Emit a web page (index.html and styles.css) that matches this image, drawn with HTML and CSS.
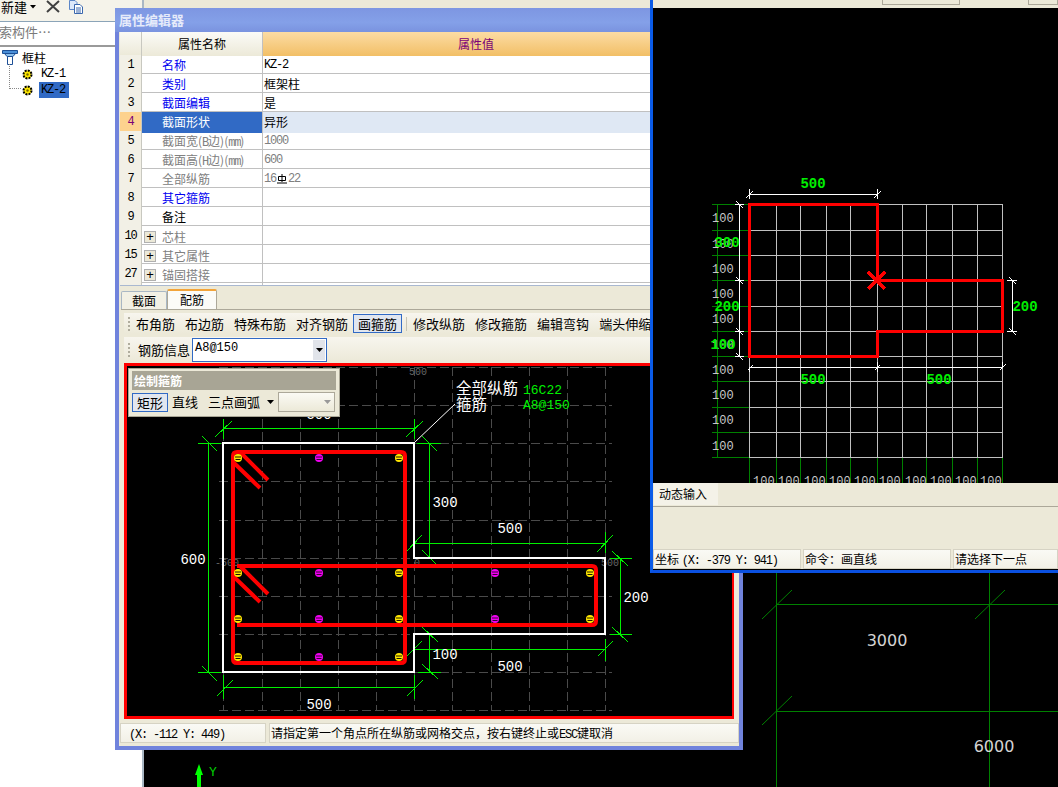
FILE: index.html
```html
<!DOCTYPE html>
<html lang="zh">
<head>
<meta charset="utf-8">
<title>属性编辑器</title>
<link rel="stylesheet" href="styles.css">
</head>
<body>
<div class="app">
  <aside class="left-pane">
    <div class="left-tools">
      <span class="new-btn">新建</span>
      <svg class="tri-icon" width="6" height="4" viewBox="0 0 6 4"><path d="M0 0H6L3 3.5Z" fill="#000"/></svg>
      <svg class="close-icon" width="14" height="13" viewBox="0 0 14 13"><path d="M1 1L13 12M13 1L1 12" stroke="#404040" stroke-width="2" fill="none"/></svg>
      <svg class="copy-icon" width="16" height="14" viewBox="0 0 16 14"><path d="M1.5 .5H7L9 2.5V9.5H1.5Z" fill="#dce8fa" stroke="#5c86c8"/><path d="M6.500 4.500H12L14.500 7V13.500H6.500Z" fill="#fff" stroke="#3a67ad"/><path d="M8 8H13M8 10H13M8 12H13" stroke="#3a67ad"/></svg>
    </div>
    <div class="search"><span class="search-text">搜索构件…</span></div>
    <div class="tree">
      <div class="tree-root">
        <svg width="16" height="15" viewBox="0 0 16 15"><path d="M.5 .5H15.500V3.500H.5Z" fill="#4a8fd8" stroke="#1c4f96"/><path d="M2.500 3.500L5 6.500H11L13.500 3.500Z" fill="#8cc0ee" stroke="#1c4f96"/><path d="M5.500 6.500H10.500V14.500H5.500Z" fill="#fff" stroke="#1c4f96"/></svg>
        <span>框柱</span>
      </div>
      <div class="tree-leaf">
        <svg class="gear" width="11" height="11" viewBox="0 0 11 11"><circle cx="5.500" cy="5.500" r="4" fill="#ffe800" stroke="#000" stroke-width="2" stroke-dasharray="2 1.100"/><circle cx="5.500" cy="5.500" r="1.200" fill="#7a6a00"/></svg>
        <span class="lat leaf-label">KZ-1</span>
      </div>
      <div class="tree-leaf">
        <svg class="gear" width="11" height="11" viewBox="0 0 11 11"><circle cx="5.500" cy="5.500" r="4" fill="#ffe800" stroke="#000" stroke-width="2" stroke-dasharray="2 1.100"/><circle cx="5.500" cy="5.500" r="1.200" fill="#7a6a00"/></svg>
        <span class="lat leaf-label is-selected">KZ-2</span>
      </div>
      <div class="tree-guide"></div>
    </div>
  </aside>

  <main class="workspace">
    <div class="top-strip"></div>
    <svg class="back-drawing" viewBox="144 8 914 779" width="914" height="779">
      <path class="grn-dark" d="M776.500 8V787M989.500 8V787M776 604.500H1058M776 711.500H1058"/>
      <path class="grn-dark thin" d="M762 619L792 590M975 619L1005 590M762 725L792 696"/>
      <text class="back-num" x="887" y="646" text-anchor="middle">3000</text>
      <text class="back-num" x="994" y="752" text-anchor="middle">6000</text>
      <path d="M199 764L203 775H201V787H197V775H195Z" fill="#00ff00"/>
      <text class="axis-label" x="209" y="776">Y</text>
    </svg>
  </main>

  <section class="prop-win">
    <header class="prop-title">属性编辑器</header>
    <div class="prop-table">
      <div class="prop-row prop-head"><div class="num"></div><div class="name-head">属性名称</div><div class="val-head">属性值</div></div>
      <div class="prop-row"><div class="num">1</div><div class="name link">名称</div><div class="val"><span class="lat">KZ-2</span></div></div>
      <div class="prop-row"><div class="num">2</div><div class="name link">类别</div><div class="val">框架柱</div></div>
      <div class="prop-row"><div class="num">3</div><div class="name link">截面编辑</div><div class="val">是</div></div>
      <div class="prop-row is-current"><div class="num">4</div><div class="name">截面形状</div><div class="val">异形</div></div>
      <div class="prop-row"><div class="num">5</div><div class="name muted">截面宽(<span class="lat">B</span>边)(<span class="lat">mm</span>)</div><div class="val muted"><span class="lat">1000</span></div></div>
      <div class="prop-row"><div class="num">6</div><div class="name muted">截面高(<span class="lat">H</span>边)(<span class="lat">mm</span>)</div><div class="val muted"><span class="lat">600</span></div></div>
      <div class="prop-row"><div class="num">7</div><div class="name muted">全部纵筋</div><div class="val muted"><span class="lat">16</span><svg class="rebar" width="10" height="10" viewBox="0 0 10 10"><path d="M1.500 2.500H8.500V6.500H1.500ZM5 0V8M0 9H10" fill="none" stroke="#000"/></svg><span class="lat">22</span></div></div>
      <div class="prop-row"><div class="num">8</div><div class="name link">其它箍筋</div><div class="val"></div></div>
      <div class="prop-row"><div class="num">9</div><div class="name">备注</div><div class="val"></div></div>
      <div class="prop-row"><div class="num">10</div><div class="name muted is-group"><span class="plus">+</span>芯柱</div><div class="val"></div></div>
      <div class="prop-row"><div class="num">15</div><div class="name muted is-group"><span class="plus">+</span>其它属性</div><div class="val"></div></div>
      <div class="prop-row"><div class="num">27</div><div class="name muted is-group"><span class="plus">+</span>锚固搭接</div><div class="val"></div></div>
    </div>
    <div class="tabs">
      <span class="tab">截面</span>
      <span class="tab is-active">配筋</span>
    </div>
    <div class="toolbar">
      <span class="grip"></span>
      <span class="tool">布角筋</span>
      <span class="tool">布边筋</span>
      <span class="tool">特殊布筋</span>
      <span class="tool">对齐钢筋</span>
      <span class="tool is-on">画箍筋</span>
      <span class="tool-sep"></span>
      <span class="tool">修改纵筋</span>
      <span class="tool">修改箍筋</span>
      <span class="tool">编辑弯钩</span>
      <span class="tool">端头伸缩</span>
    </div>
    <div class="toolbar toolbar-two">
      <span class="grip"></span>
      <span class="info-label">钢筋信息</span>
      <div class="combo"><span class="combo-text">A8@150</span><span class="combo-btn"><svg width="7" height="4" viewBox="0 0 7 4"><path d="M0 0H7L3.500 4Z" fill="#000"/></svg></span></div>
    </div>
    <div class="canvas-frame">
      <svg class="draw" viewBox="127 367 605 350" width="605" height="350">
        <defs>
          <g id="dot-y"><circle r="4" fill="#ffe600"/><path d="M-3 -1H3M-2.500 1.500H2.500" stroke="#000" stroke-width=".9"/></g>
          <g id="dot-m"><circle r="4" fill="#f000f0"/><path d="M-3 -1H3M-2.500 1.500H2.500" stroke="#200020" stroke-width=".9"/></g>
        </defs>
        <path class="grid-dash" d="M223.500 368V712M262.500 368V712M300.500 368V712M338.500 368V712M376.500 368V712M414.500 368V712M452.500 368V712M491.500 368V712M529.500 368V712M567.500 368V712M605.500 368V712M219 368.500H612M219 406.500H612M219 444.500H612M219 482.500H612M219 521.500H612M219 559.500H612M219 597.500H612M219 635.500H612M219 673.500H612M219 711.500H612"/>
        <text class="axis-num" x="418" y="376" text-anchor="middle">500</text>
        <text class="axis-num" x="215" y="567">-500</text>
        <text class="axis-num" x="414" y="567">0</text>
        <text class="axis-num" x="601" y="567">500</text>

        <path class="grn" d="M223.500 429.500H414.500M223.500 420V440M414.500 420V440M215 438L232 422M406 438L423 422"/>
        <path class="grn" d="M208.500 444V673M198 444.500H221M198 673.500H221M202 437L217 452M202 667L217 682"/>
        <path class="grn" d="M223.500 688.500H414.500M223.500 676V700M414.500 676V700M217 697L233 681M407 697L423 681"/>
        <path class="grn" d="M429.500 444V559M417 444.500H441M418 559.500H441M422 437L437 452M422 551L438 567"/>
        <path class="grn" d="M414.500 544.500H605.500M414.500 533V558M605.500 533V554M406 553L422 536M597 553L613 536"/>
        <path class="grn" d="M620.500 559V635M610 559.500H632M610 635.500H632M612 552L628 567M612 628L628 643"/>
        <path class="grn" d="M414.500 650.500H605.500M414.500 640V662M605.500 640V662M406 658L422 642M598 657L613 642"/>
        <path class="grn" d="M429.500 635V673M418 635.500H441M418 673.500H441M422 628L438 643M422 665L438 680"/>
        <path class="wht-thin" d="M415 443L455 405"/>

        <path class="outline" d="M223 444H414V559H605V635H414V673H223Z"/>

        <path class="stirrup" d="M233 457Q233 453 237 453H401Q405 453 405 457V660Q405 664 401 664H237Q233 664 233 660Z"/>
        <path class="stirrup" d="M237 567H592Q596 567 596 571V622Q596 626 592 626H237"/>
        <path class="stirrup" d="M240 453L268 481M233 463L260 489M240 567L268 595M233 577L260 603"/>

        <use href="#dot-y" x="238" y="459"/><use href="#dot-m" x="319" y="459"/><use href="#dot-y" x="399" y="459"/>
        <use href="#dot-y" x="238" y="574"/><use href="#dot-m" x="319" y="574"/><use href="#dot-y" x="399" y="574"/><use href="#dot-m" x="495" y="574"/><use href="#dot-y" x="590" y="574"/>
        <use href="#dot-y" x="238" y="620"/><use href="#dot-m" x="319" y="620"/><use href="#dot-y" x="399" y="620"/><use href="#dot-m" x="495" y="620"/><use href="#dot-y" x="590" y="620"/>
        <use href="#dot-y" x="238" y="658"/><use href="#dot-m" x="319" y="658"/><use href="#dot-y" x="399" y="658"/>

        <text class="dim-num" x="319" y="420" text-anchor="middle">500</text>
        <text class="dim-num" x="193" y="565" text-anchor="middle">600</text>
        <text class="dim-num" x="319" y="710" text-anchor="middle">500</text>
        <text class="dim-num" x="445" y="508" text-anchor="middle">300</text>
        <text class="dim-num" x="510" y="534" text-anchor="middle">500</text>
        <text class="dim-num" x="636" y="603" text-anchor="middle">200</text>
        <text class="dim-num" x="445" y="660" text-anchor="middle">100</text>
        <text class="dim-num" x="510" y="672" text-anchor="middle">500</text>
        <text class="note" x="456" y="395">全部纵筋</text>
        <text class="note" x="456" y="411">箍筋</text>
        <text class="note-val" x="523" y="395">16C22</text>
        <text class="note-val" x="523" y="410">A8@150</text>
      </svg>
      <div class="float-panel">
        <div class="float-title">绘制箍筋</div>
        <div class="float-tools">
          <span class="float-tool is-on">矩形</span>
          <span class="float-tool">直线</span>
          <span class="float-tool">三点画弧</span>
          <svg class="float-tri" width="7" height="4" viewBox="0 0 7 4"><path d="M0 0H7L3.500 4Z" fill="#000"/></svg>
          <span class="float-combo"><svg width="7" height="4" viewBox="0 0 7 4"><path d="M0 0H7L3.500 4Z" fill="#999"/></svg></span>
        </div>
      </div>
    </div>
    <footer class="status">
      <span class="status-cell status-pos"><span class="lat">(X: -112 Y: 449)</span></span>
      <span class="status-cell status-msg">请指定第一个角点所在纵筋或网格交点，按右键终止或<span class="lat">ESC</span>键取消</span>
    </footer>
  </section>

  <section class="edit-win">
    <div class="edit-strip"><span class="strip-box strip-a"></span><span class="strip-box strip-b"></span></div>
    <svg class="edit-draw" viewBox="653 8 405 475" width="405" height="475">
      <path class="grn-dark" d="M717.500 204V457M712 204.500H749M712 230.500H749M712 255.500H749M712 280.500H749M712 306.500H749M712 331.500H749M712 356.500H749M712 381.500H749M712 407.500H749M712 432.500H749M712 457.500H749M749.500 457V483M776.500 457V483M800.500 457V483M826.500 457V483M850.500 457V483M877.500 457V483M902.500 457V483M926.500 457V483M952.500 457V483M977.500 457V483M1002.500 457V483"/>
      <path class="grid-solid" d="M749.500 204V457M776.500 204V457M800.500 204V457M826.500 204V457M850.500 204V457M877.500 204V457M902.500 204V457M926.500 204V457M952.500 204V457M977.500 204V457M1002.500 204V457M749 204.500H1003M749 230.500H1003M749 255.500H1003M749 280.500H1003M749 306.500H1003M749 331.500H1003M749 356.500H1003M749 381.500H1003M749 407.500H1003M749 432.500H1003M749 457.500H1003"/>
      <g class="row-labels">
        <text x="712" y="222">100</text><text x="712" y="248">100</text><text x="712" y="273">100</text><text x="712" y="298">100</text><text x="712" y="323">100</text><text x="712" y="349">100</text><text x="712" y="374">100</text><text x="712" y="399">100</text><text x="712" y="424">100</text><text x="712" y="450">100</text>
        <text x="753" y="485">100</text><text x="778" y="485">100</text><text x="804" y="485">100</text><text x="829" y="485">100</text><text x="854" y="485">100</text><text x="879" y="485">100</text><text x="905" y="485">100</text><text x="930" y="485">100</text><text x="955" y="485">100</text><text x="980" y="485">100</text>
      </g>
      <path class="wht-dim" d="M749.500 194.500H877.500M749.500 189V199M877.500 189V199M746 198L753 191M874 198L881 191"/>
      <path class="wht-dim" d="M739.500 204V356M735 204.500H744M735 280.500H744M735 331.500H744M735 356.500H744M736 201L743 208M736 277L743 284M736 328L743 335M736 353L743 360"/>
      <path class="wht-dim" d="M1012.500 280V331M1007 280.500H1017M1007 331.500H1017M1009 277L1016 284M1009 328L1016 335"/>
      <path class="wht-dim" d="M749 367.500H1002M749.500 367V372M877.500 362V372M1002.500 362V367M748 370L753 365M875 370L880 365M1000 370L1006 364"/>
      <path class="poly" d="M749.500 204.500H877V280.500H1002.500V331.500H877V356.500H749.500Z"/>
      <path class="poly" d="M868 272L885 289M885 272L868 289"/>
      <g class="green-labels">
        <text x="813" y="188">500</text>
        <text x="727" y="247">300</text>
        <text x="727" y="311">200</text>
        <text x="723" y="349">100</text>
        <text x="1025" y="311">200</text>
        <text x="813" y="384">500</text>
        <text x="939" y="384">500</text>
      </g>
    </svg>
    <div class="edit-bottom">
      <div class="edit-tabs"><span class="edit-tab">动态输入</span></div>
      <div class="edit-input"></div>
      <div class="edit-status">
        <span class="status-cell edit-c1">坐标 <span class="lat">(X: -379 Y: 941)</span></span>
        <span class="status-cell edit-c2">命令：画直线</span>
        <span class="status-cell edit-c3">请选择下一点</span>
      </div>
    </div>
  </section>
</div>
</body>
</html>
```
FILE: styles.css
```css
* { box-sizing: border-box; }
html, body { margin: 0; padding: 0; }
body {
  width: 1058px;
  height: 787px;
  overflow: hidden;
  background: #000;
  color: #000;
  font: 12px/16px "Noto Sans CJK SC", "Liberation Sans", sans-serif;
}
.lat { font: 12px/16px "Liberation Mono", monospace; letter-spacing: -1.2px; }

.app { position: relative; display: flex; width: 1058px; height: 787px; overflow: hidden; }

/* left tree pane */
.left-pane { width: 144px; height: 787px; flex: none; background: #fff; border-right: 2px solid #a9b7c4; }
.left-tools { display: flex; align-items: center; height: 22px; padding: 0 0 8px 1px; background: #f5f3ea; border-bottom: 1px solid #8ba4b8; font-size: 13px; }
.new-btn { line-height: 14px; }
.tri-icon { margin-left: 3px; }
.close-icon { margin-left: 10px; }
.copy-icon { margin-left: 8px; }
.search { height: 25px; background: #fff; border-bottom: 2px solid #9a9a9a; padding-top: 2px; overflow: hidden; white-space: nowrap; }
.search-text { display: block; margin-left: -14px; font-size: 13px; color: #7a7a7a; }
.tree { position: relative; padding: 2px 0 0 2px; }
.tree-root { display: flex; align-items: center; gap: 4px; height: 17px; font-size: 12px; }
.tree-leaf { display: flex; align-items: center; height: 16px; padding-left: 20px; }
.gear { flex: none; }
.leaf-label { margin-left: 6px; padding: 0 4px 0 2px; color: #000; }
.is-selected { background: #316ac5; }
.tree-guide { position: absolute; left: 9px; top: 17px; width: 12px; height: 25px; border-left: 1px dotted #888; border-bottom: 1px dotted #888; }

/* desktop drawing behind */
.workspace { flex: 1; position: relative; }
.top-strip { height: 8px; background: #ece9d8; }
.back-drawing { display: block; position: absolute; left: 0; top: 8px; }
.grn-dark { fill: none; stroke: #008000; stroke-width: 1; shape-rendering: crispEdges; }
.grn-dark.thin { shape-rendering: auto; }
.back-num { font: 16px "DejaVu Sans", sans-serif; fill: #d4d4d4; }
.axis-label { font: 13px "Liberation Mono", monospace; fill: #00d000; }

/* property window */
.prop-win { position: absolute; left: 115px; top: 8px; width: 628px; height: 742px; display: flex; flex-direction: column; background: #ece9d8; border: 4px solid #7083dc; border-top: 0; }
.prop-title { flex: none; height: 24px; margin: 0 -4px; padding-left: 4px; background: linear-gradient(#7d96e2, #84a0e8 60%, #7a93df); color: #e6ebfa; font-size: 13px; font-weight: 700; line-height: 24px; }
.prop-table { flex: none; height: 254px; margin-left: 1px; background: #fff; border-bottom: 1px solid #a9b8d0; }
.prop-row { display: grid; grid-template-columns: 22px 121px 1fr; height: 19px; border-bottom: 1px solid #c0c0c0; line-height: 20px; white-space: nowrap; }
.prop-head { height: 23px; line-height: 24px; }
.num { background: #f2f0e6; border-right: 1px solid #c8c8c0; text-align: center; font: 12px/21px "Liberation Mono", monospace; letter-spacing: -1.2px; }
.prop-head .num { background: linear-gradient(#fafaf5, #ece9d8); }
.name-head { background: linear-gradient(#fbfbf7, #ece9d8); border-right: 1px solid #c0c0c0; text-align: center; }
.val-head { background: linear-gradient(#fcdca4, #f2bf66); color: #7a0078; padding-right: 50px; text-align: center; }
.name { padding-left: 20px; border-right: 1px solid #c0c0c0; }
.name .lat, .val .lat { line-height: 20px; }
.val { padding-left: 1px; display: flex; align-items: flex-start; }
.link { color: #0000f0; }
.muted { color: #808080; }
.is-group { padding-left: 2px; display: flex; align-items: center; gap: 6px; }
.plus { display: flex; align-items: center; justify-content: center; width: 12px; height: 12px; border: 1px solid #b0b0b0; background: #ece9d8; color: #000; font: 13px/10px "Liberation Sans", sans-serif; }
.rebar { margin: 5px 1px 0; }
.is-current .num { background: #fdd28e; color: #7a0078; }
.is-current .name { background: #316ac5; color: #fff; }
.is-current .val { background: #dfe8f4; }

.tabs { flex: none; display: flex; align-items: flex-end; height: 24px; margin-left: 2px; border-bottom: 1px solid #aca899; }
.tab { width: 46px; height: 18px; border: 1px solid #a9b7c4; border-bottom: 0; border-radius: 2px 2px 0 0; background: #f2f0e4; text-align: center; line-height: 18px; font-size: 12px; }
.tab.is-active { width: 50px; height: 20px; background: #fbfbf7; border-color: #aca899; border-top: 2px solid #f2a43a; line-height: 17px; }

.toolbar { flex: none; display: flex; align-items: center; height: 21px; margin: 3px 0 0 5px; padding-left: 4px; background: linear-gradient(#f7f5ee, #ece9d8); font-size: 13px; white-space: nowrap; overflow: hidden; }
.toolbar-two { height: 25px; margin-top: 3px; }
.grip { flex: none; width: 2px; height: 14px; margin-right: 6px; background: repeating-linear-gradient(#b0ad9e 0 2px, transparent 2px 4px); }
.tool { flex: none; margin-right: 10px; line-height: 18px; }
.tool.is-on { height: 19px; margin-left: -5px; margin-right: 4px; padding: 0 4px; border: 1px solid #316ac5; background: #e1e6ef; line-height: 17px; }
.tool-sep { flex: none; width: 1px; height: 14px; margin-right: 6px; background: #c8c5b5; }
.info-label { margin-left: 2px; margin-right: 2px; }
.combo { display: flex; width: 135px; height: 24px; border: 1px solid #316ac5; background: #fff; }
.combo-text { flex: 1; padding-left: 2px; font: 12px/19px "Liberation Mono", monospace; }
.combo-btn { display: flex; width: 12px; margin: 1px; align-items: center; justify-content: center; background: #e1e4ea; }

.canvas-frame { position: relative; flex: none; width: 610px; height: 356px; margin: 1px 0 0 5px; background: #000; border: 3px solid #f00; border-width: 3px 2px 3px 3px; }
.draw { display: block; }
.grid-dash { fill: none; stroke: #4a4a4a; stroke-dasharray: 9 4; shape-rendering: crispEdges; }
.axis-num { font: 10px "Liberation Mono", monospace; fill: #666; }
.grn { fill: none; stroke: #00f000; stroke-width: 1; shape-rendering: crispEdges; }
.wht-thin { fill: none; stroke: #fff; stroke-width: 1; }
.outline { fill: none; stroke: #fff; stroke-width: 2; shape-rendering: crispEdges; }
.stirrup { fill: none; stroke: #f00; stroke-width: 4; }
.dim-num { font: 14px "Liberation Mono", monospace; fill: #fff; }
.note { font: 15.5px "Noto Sans CJK SC", sans-serif; fill: #fff; }
.note-val { font: 13px "Liberation Mono", monospace; fill: #00f000; }

.float-panel { position: absolute; left: 1px; top: 2px; width: 212px; height: 49px; padding: 2px 3px; background: #ece9d8; border: 1px solid #a8a595; }
.float-title { height: 19px; padding-left: 2px; background: #a8a595; color: #fff; font-size: 12px; font-weight: 700; line-height: 19px; }
.float-tools { display: flex; align-items: center; height: 24px; font-size: 13px; white-space: nowrap; }
.float-tool { margin-right: 10px; line-height: 18px; }
.float-tool.is-on { width: 36px; height: 19px; margin-right: 4px; border: 1px solid #316ac5; background: #e1e6ef; text-align: center; line-height: 17px; }
.float-tri { margin-left: -3px; }
.float-combo { display: flex; align-items: center; justify-content: flex-end; width: 57px; height: 20px; margin-left: 4px; padding-right: 3px; border: 1px solid #aca899; background: linear-gradient(#fbfaf4, #ece9d8); }

.status { flex: none; display: flex; gap: 3px; height: 22px; margin-top: 4px; margin-left: 1px; font-size: 12px; white-space: nowrap; }
.status-cell { display: block; height: 20px; border: 1px solid #d6d3c4; background: linear-gradient(#fafaf5, #f2f0e6); line-height: 18px; overflow: hidden; }
.status-pos { width: 146px; padding-left: 8px; }
.status-msg { flex: 1; padding-left: 1px; }

/* front window */
.edit-win { position: absolute; left: 650px; top: 0; width: 408px; height: 573px; display: flex; flex-direction: column; background: #000; border-left: 3px solid #0a5be8; border-bottom: 3px solid #0a50e0; }
.edit-strip { display: flex; flex: none; height: 8px; background: #ece9d8; align-items: flex-start; }
.strip-box { display: block; height: 5px; border: 1px solid #aca899; border-top: 0; }
.strip-a { width: 78px; margin-left: 229px; }
.strip-b { width: 30px; margin-left: 68px; }
.edit-draw { display: block; flex: none; }
.grid-solid { fill: none; stroke: #c0c0c0; stroke-width: 1; shape-rendering: crispEdges; }
.wht-dim { fill: none; stroke: #fff; stroke-width: 1; shape-rendering: crispEdges; }
.poly { fill: none; stroke: #f00; stroke-width: 3; shape-rendering: crispEdges; }
.row-labels text { font: 12px "Liberation Mono", monospace; fill: #c8c8c8; }
.green-labels text { font: 700 14px "Liberation Mono", monospace; fill: #00f000; text-anchor: middle; }
.edit-bottom { flex: none; height: 86px; background: #ece9d8; display: flex; flex-direction: column; }
.edit-tabs { height: 24px; padding-left: 1px; border-bottom: 1px solid #aca899; }
.edit-tab { display: block; width: 64px; height: 22px; padding-left: 5px; background: #f4f2e8; font-size: 12px; line-height: 22px; }
.edit-input { flex: 1; }
.edit-status { display: flex; gap: 2px; height: 20px; white-space: nowrap; font-size: 12px; }
.edit-c1 { width: 148px; padding-left: 1px; }
.edit-c2 { width: 148px; padding-left: 1px; }
.edit-c3 { flex: 1; padding-left: 1px; }
```
